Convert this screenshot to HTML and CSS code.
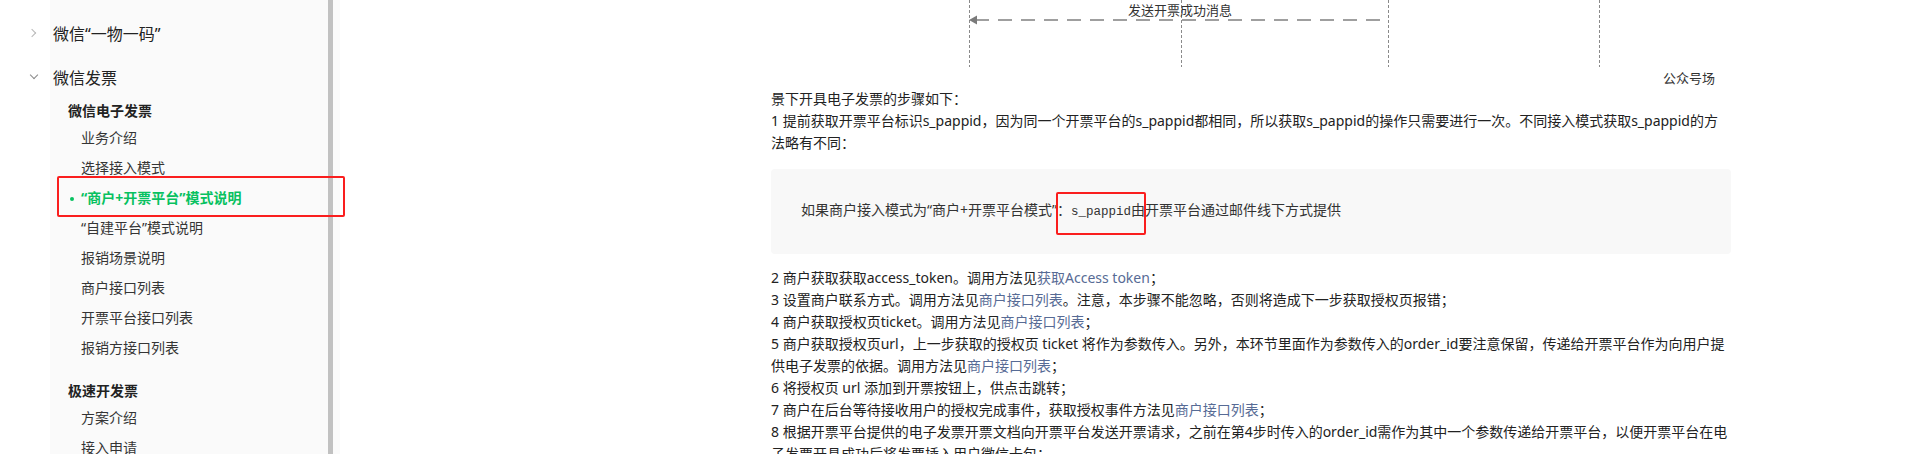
FILE: index.html
```html
<!DOCTYPE html>
<html lang="zh-CN">
<head>
  <meta charset="UTF-8">
  <title>微信发票 - “商户+开票平台”模式说明</title>
  <link rel="stylesheet" href="styles.css">
</head>
<body>
  <div class="page">
    <!-- 左侧导航 -->
    <div class="sidebar">
      <div class="nav">
        <div class="group-title"><span class="arrow arrow-right"></span>微信“一物一码”</div>
        <div class="group-title"><span class="arrow arrow-down"></span>微信发票</div>
        <div class="sub-title">微信电子发票</div>
        <div class="item">业务介绍</div>
        <div class="item">选择接入模式</div>
        <div class="item active">“商户+开票平台”模式说明</div>
        <div class="item">“自建平台”模式说明</div>
        <div class="item">报销场景说明</div>
        <div class="item">商户接口列表</div>
        <div class="item">开票平台接口列表</div>
        <div class="item">报销方接口列表</div>
        <div class="sub-title second">极速开发票</div>
        <div class="item">方案介绍</div>
        <div class="item">接入申请</div>
      </div>
      <div class="scrollbar"></div>
    </div>

    <!-- 正文 -->
    <div class="main">
      <div class="content">
        <svg class="diagram" width="960" height="88" viewBox="0 0 960 88">
          <g stroke="#8a8a8a" stroke-width="1" stroke-dasharray="3 2">
            <line x1="198.5" y1="0" x2="198.5" y2="67"/>
            <line x1="410.5" y1="0" x2="410.5" y2="67"/>
            <line x1="617.5" y1="0" x2="617.5" y2="67"/>
            <line x1="828.5" y1="0" x2="828.5" y2="67"/>
          </g>
          <line x1="204" y1="20" x2="617" y2="20" stroke="#808080" stroke-width="1.3" stroke-dasharray="14 9"/>
          <polygon points="198,20 206,15.5 206,24.5" fill="#7a7a7a"/>
          <text x="409" y="15" text-anchor="middle" class="diagram-text">发送开票成功消息</text>
          <text x="892" y="83" class="diagram-text">公众号场</text>
        </svg>

        <p>景下开具电子发票的步骤如下：</p>
        <p>1 提前获取开票平台标识s_pappid，因为同一个开票平台的s_pappid都相同，所以获取s_pappid的操作只需要进行一次。不同接入模式获取s_pappid的方法略有不同：</p>
        <div class="code-block">如果商户接入模式为“商户+开票平台模式”：<code class="marked">s_pappid</code>由开票平台通过邮件线下方式提供</div>
        <p>2 商户获取获取access_token。调用方法见<a href="#">获取Access token</a>；</p>
        <p>3 设置商户联系方式。调用方法见<a href="#">商户接口列表</a>。注意，本步骤不能忽略，否则将造成下一步获取授权页报错；</p>
        <p>4 商户获取授权页ticket。调用方法见<a href="#">商户接口列表</a>；</p>
        <p>5 商户获取授权页url，上一步获取的授权页 ticket 将作为参数传入。另外，本环节里面作为参数传入的order_id要注意保留，传递给开票平台作为向用户提供电子发票的依据。调用方法见<a href="#">商户接口列表</a>；</p>
        <p>6 将授权页 url 添加到开票按钮上，供点击跳转；</p>
        <p>7 商户在后台等待接收用户的授权完成事件，获取授权事件方法见<a href="#">商户接口列表</a>；</p>
        <p>8 根据开票平台提供的电子发票开票文档向开票平台发送开票请求，之前在第4步时传入的order_id需作为其中一个参数传递给开票平台，以便开票平台在电子发票开具成功后将发票插入用户微信卡包；</p>
      </div>
    </div>
  </div>
</body>
</html>
```

FILE: styles.css
```css
/* 기본 리셋 */
* { box-sizing: border-box; margin: 0; padding: 0; }
body {
  font-family: "Noto Sans", "Noto Sans CJK SC", sans-serif;
  background: #fff;
  color: #333;
  height: 454px;
  overflow: hidden;
}
.page {
  display: flex;
  height: 454px;
}

/* 左侧导航 */
.sidebar {
  width: 340px;
  flex-shrink: 0;
  display: flex;
  background: linear-gradient(to right, #fff 50px, #fafafa 50px);
}
.nav {
  width: 328px;
  padding-top: 11px;
}
.scrollbar {
  width: 5px;
  background: #c1c1c1;
  height: 100%;
}
.group-title {
  display: flex;
  align-items: center;
  height: 44px;
  font-size: 16px;
  color: #222;
}
.arrow {
  width: 53px;
  height: 44px;
  position: relative;
}
.arrow::before {
  content: "";
  position: absolute;
  width: 5px;
  height: 5px;
  border-right: 1px solid #b8b8b8;
  border-bottom: 1px solid #b8b8b8;
}
.arrow-right::before { left: 29px; top: 19px; transform: rotate(-45deg); }
.arrow-down::before { left: 31px; top: 17px; transform: rotate(45deg); border-color: #8a8a8a; }
.sub-title {
  padding-left: 68px;
  line-height: 24px;
  font-size: 14px;
  font-weight: bold;
  color: #222;
}
.sub-title.second { margin-top: 16px; }
.item {
  padding-left: 81px;
  line-height: 30px;
  font-size: 14px;
  color: #353535;
  position: relative;
}
.item.active {
  color: #07c160;
  font-weight: bold;
}
.item.active::before {
  content: "";
  position: absolute;
  left: 70px;
  top: 14px;
  width: 4px;
  height: 4px;
  border-radius: 50%;
  background: #07c160;
}
.item.active::after {
  content: "";
  position: absolute;
  left: 57px;
  top: -7px;
  width: 284px;
  height: 37px;
  border: 2px solid #fa1e1e;
  border-radius: 2px;
}

/* 正文 */
.main {
  flex: 1;
  padding-left: 431px;
}
.content {
  width: 960px;
  font-size: 14px;
  line-height: 22px;
  color: #222;
}
.diagram { display: block; }
.diagram-text {
  font-family: "Noto Sans CJK SC", sans-serif;
  font-size: 13px;
  fill: #333;
}
.content a {
  color: #576b95;
  text-decoration: none;
}
.code-block {
  margin: 15px 0 13px;
  padding: 30px 30px 31px;
  background: #f8f8f8;
  border-radius: 4px;
  color: #333;
}
code {
  font-family: "Liberation Mono", "DejaVu Sans Mono", monospace;
  font-size: 12.5px;
  color: #333;
}
.marked { position: relative; }
.marked::after {
  content: "";
  position: absolute;
  left: -15px;
  top: -13px;
  width: 86px;
  height: 39px;
  border: 2px solid #fa1e1e;
  border-radius: 2px;
}
```
